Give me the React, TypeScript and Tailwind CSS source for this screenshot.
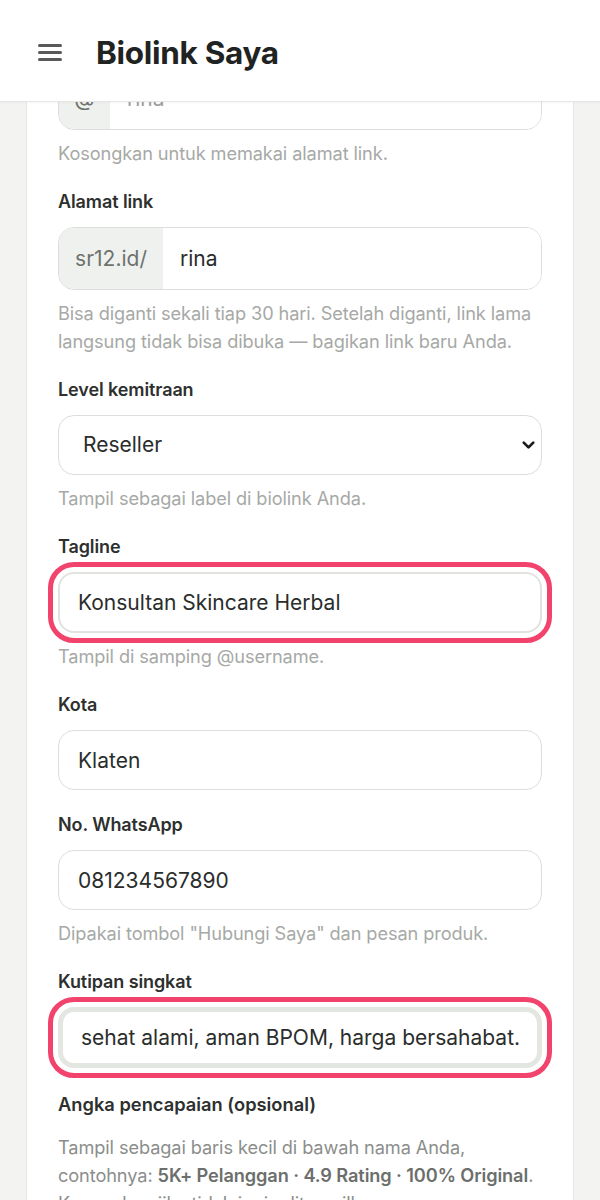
import React from 'react';
import { ChevronDown } from 'lucide-react';

const font = { fontFamily: 'Inter, "Noto Sans", sans-serif' };

function Label({ children }: { children: React.ReactNode }) {
  return <label className="block text-[18px] leading-6 font-semibold text-[#2d302e] mb-[13px] tracking-[-0.1px]">{children}</label>;
}

function Help({ children }: { children: React.ReactNode }) {
  return <p className="mt-[9px] text-[18.2px] leading-7 text-[#a6a9a6] tracking-[-0.1px]">{children}</p>;
}

function TextInput({ value, highlight, thick }: { value: string; highlight?: boolean; thick?: boolean }) {
  return (
    <input
      readOnly
      value={value}
      className={`block w-full rounded-2xl bg-white text-[21px] text-[#2a2d2b] outline-none ${
        thick
          ? 'h-[61px] border-[5px] border-[#e3e6e1] px-[18px]'
          : highlight
            ? 'h-[61px] border-2 border-[#e1e3df] px-[18px]'
            : 'h-[60px] border border-[#dcdedb] px-[19px]'
      } ${highlight ? 'outline-[5px] outline-solid outline-[#f2436d] outline-offset-[5px]' : ''}`}
    />
  );
}

function PrefixInput({ prefix, value, placeholder, prefixWidth }: { prefix: string; value?: string; placeholder?: string; prefixWidth: string }) {
  return (
    <div className="flex h-[63px] rounded-2xl border border-[#dcdedb] overflow-hidden bg-white">
      <span className={`flex items-center justify-center ${prefixWidth} bg-[#eff1ee] text-[21px] text-[#6e726e]`}>{prefix}</span>
      <input
        readOnly
        value={value ?? ''}
        placeholder={placeholder}
        className="flex-1 px-[17px] text-[21px] text-[#2a2d2b] placeholder:text-[#9da09d] outline-none bg-white"
      />
    </div>
  );
}

export default function App() {
  return (
    <div className="w-[600px] h-[1200px] overflow-hidden bg-[#f3f4f2]" style={font}>
      {/* Header */}
      <header className="relative z-10 h-[102px] bg-white border-b border-[#e6e7e5] shadow-[0_1px_3px_rgba(0,0,0,0.04)] flex items-center px-[38px] pt-[4px] gap-[34px]">
        <div className="flex flex-col gap-[4.5px] w-[24px]">
          <span className="block h-[2.5px] bg-[#575a58] rounded" />
          <span className="block h-[2.5px] bg-[#575a58] rounded" />
          <span className="block h-[2.5px] bg-[#575a58] rounded" />
        </div>
        <h1 className="text-[31.5px] font-bold text-[#1f2321] tracking-[-0.3px]">Biolink Saya</h1>
      </header>

      {/* Scrolled form body */}
      <main className="h-[1098px] overflow-hidden px-[26px]">
        <div className="-mt-[104px] bg-white border border-[#e6e8e4] rounded-2xl px-[31px] pt-[31px] pb-10">
          <div className="flex flex-col gap-[23px]">
            <div>
              <Label>Username</Label>
              <PrefixInput prefix="@" placeholder="rina" prefixWidth="w-[51px]" />
              <Help>Kosongkan untuk memakai alamat link.</Help>
            </div>

            <div>
              <Label>Alamat link</Label>
              <PrefixInput prefix="sr12.id/" value="rina" prefixWidth="w-[104px]" />
              <Help>Bisa diganti sekali tiap 30 hari. Setelah diganti, link lama langsung tidak bisa dibuka — bagikan link baru Anda.</Help>
            </div>

            <div>
              <Label>Level kemitraan</Label>
              <div className="relative">
                <select
                  defaultValue="Reseller"
                  className="block w-full h-[60px] appearance-none rounded-2xl border border-[#dcdedb] bg-white pl-[24px] text-[21px] text-[#2a2d2b] outline-none"
                >
                  <option>Reseller</option>
                  <option>Agen</option>
                  <option>Distributor</option>
                </select>
                <ChevronDown className="pointer-events-none absolute right-[4px] top-1/2 -translate-y-1/2 w-[19px] h-[19px] text-[#1c1c1c]" strokeWidth={3.5} />
              </div>
              <Help>Tampil sebagai label di biolink Anda.</Help>
            </div>

            <div>
              <Label>Tagline</Label>
              <TextInput value="Konsultan Skincare Herbal" highlight />
              <Help>Tampil di samping @username.</Help>
            </div>

            <div>
              <Label>Kota</Label>
              <TextInput value="Klaten" />
            </div>

            <div>
              <Label>No. WhatsApp</Label>
              <TextInput value="081234567890" />
              <Help>Dipakai tombol "Hubungi Saya" dan pesan produk.</Help>
            </div>

            <div>
              <Label>Kutipan singkat</Label>
              <TextInput value="sehat alami, aman BPOM, harga bersahabat." highlight thick />
            </div>

            <div className="mt-[1px]">
              <h3 className="text-[18.3px] leading-6 font-semibold text-[#2d302e]">Angka pencapaian (opsional)</h3>
              <p className="mt-[17px] text-[18.2px] leading-7 text-[#8b8e8b] tracking-[-0.1px]">
                Tampil sebagai baris kecil di bawah nama Anda,
                <br />
                contohnya: <strong className="font-semibold text-[#6c6f6c]">5K+ Pelanggan · 4.9 Rating · 100% Original</strong>.
                <br />
                Kosongkan jika tidak ingin ditampilkan.
              </p>
            </div>
          </div>
        </div>
      </main>
    </div>
  );
}
